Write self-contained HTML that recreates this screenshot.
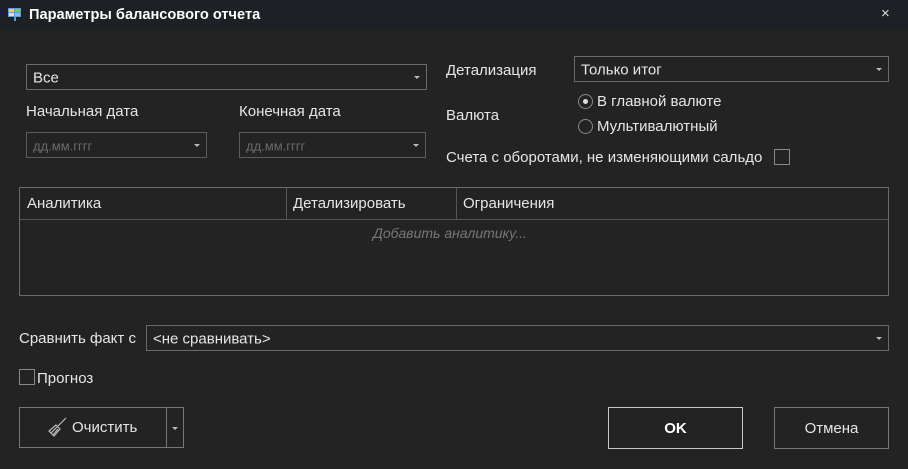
<!DOCTYPE html>
<html><head><meta charset="utf-8"><style>
*{box-sizing:border-box;margin:0;padding:0}
body{width:908px;height:469px;background:#232323;font-family:"Liberation Sans","DejaVu Sans",sans-serif;font-size:15px;color:#e6e6e6;position:relative;overflow:hidden}
.a{position:absolute;white-space:nowrap}
.box{position:absolute;border:1px solid #6a6a6a;background:#232323}
.arr{position:absolute;right:6px;top:50%;margin-top:-1px;width:0;height:0;border-left:3px solid transparent;border-right:3px solid transparent;border-top:3px solid #bbb}
.t{position:absolute;left:6px;top:50%;transform:translateY(-45%)}
.l{margin-top:1px}
</style></head><body>
<div class="a" style="left:0;top:0;width:908px;height:30px;background:#1d2024"></div>
<svg class="a" style="left:8px;top:8px" width="14" height="14"><rect x="0" y="0" width="13" height="9" fill="#5aa0d8"/><rect x="1" y="1" width="5" height="3" fill="#f0d060"/><rect x="7" y="1" width="5" height="3" fill="#80c860"/><rect x="1" y="5" width="5" height="3" fill="#e0e0e0"/><rect x="7" y="5" width="5" height="3" fill="#80c0f0"/><rect x="6" y="9" width="2" height="4" fill="#5aa0d8"/></svg>
<div class="a" style="left:29px;top:7px;font-weight:bold;font-size:14.6px;color:#fff">Параметры балансового отчета</div>
<div class="a" style="left:881px;top:5px;font-size:15px;color:#ddd">×</div>

<div class="box" style="left:26px;top:64px;width:401px;height:26px"><span class="t">Все</span><i class="arr"></i></div>
<div class="a l" style="left:26px;top:102px">Начальная дата</div>
<div class="a l" style="left:239px;top:102px">Конечная дата</div>
<div class="box" style="left:26px;top:132px;width:181px;height:26px;border-color:#5c5c5c"><span class="t" style="color:#6a6a6a;font-size:13px">дд.мм.гггг</span><i class="arr"></i></div>
<div class="box" style="left:239px;top:132px;width:187px;height:26px;border-color:#5c5c5c"><span class="t" style="color:#6a6a6a;font-size:13px">дд.мм.гггг</span><i class="arr"></i></div>

<div class="a l" style="left:446px;top:61px">Детализация</div>
<div class="box" style="left:574px;top:56px;width:315px;height:26px"><span class="t">Только итог</span><i class="arr"></i></div>
<div class="a l" style="left:446px;top:106px">Валюта</div>
<div class="a" style="left:578px;top:94px;width:15px;height:15px;border:1px solid #888;border-radius:50%"><div style="position:absolute;left:4px;top:4px;width:5px;height:5px;border-radius:50%;background:#ddd"></div></div>
<div class="a l" style="left:597px;top:92px">В главной валюте</div>
<div class="a" style="left:578px;top:119px;width:15px;height:15px;border:1px solid #888;border-radius:50%"></div>
<div class="a l" style="left:597px;top:117px">Мультивалютный</div>
<div class="a l" style="left:446px;top:148px">Счета с оборотами, не изменяющими сальдо</div>
<div class="a" style="left:774px;top:149px;width:16px;height:16px;border:1px solid #888"></div>

<div class="box" style="left:19px;top:187px;width:870px;height:109px"></div>
<div class="a" style="left:20px;top:219px;width:868px;height:1px;background:#555"></div>
<div class="a" style="left:286px;top:188px;width:1px;height:31px;background:#555"></div>
<div class="a" style="left:456px;top:188px;width:1px;height:31px;background:#555"></div>
<div class="a l" style="left:27px;top:194px">Аналитика</div>
<div class="a l" style="left:293px;top:194px">Детализировать</div>
<div class="a l" style="left:463px;top:194px">Ограничения</div>
<div class="a l" style="left:373px;top:224px;font-style:italic;color:#777;font-size:14px">Добавить аналитику...</div>

<div class="a l" style="left:19px;top:329px">Сравнить факт с</div>
<div class="box" style="left:146px;top:325px;width:743px;height:26px"><span class="t">&lt;не сравнивать&gt;</span><i class="arr"></i></div>
<div class="a" style="left:19px;top:369px;width:16px;height:16px;border:1px solid #888"></div>
<div class="a l" style="left:37px;top:369px">Прогноз</div>

<div class="box" style="left:19px;top:407px;width:165px;height:41px;border-color:#777"></div>
<div class="a" style="left:166px;top:408px;width:1px;height:39px;background:#777"></div>
<i class="arr" style="left:172px;right:auto;top:427px;margin:0"></i>
<svg class="a" style="left:48px;top:417px" width="20" height="20" fill="none" stroke="#bbb" stroke-width="1.2"><path d="M18 1 L10 9"/><path d="M8 8 L12 12 L6 19 L1 14 Z"/><path d="M3 16 L9 10 M5 18 L10 12"/></svg>
<div class="a l" style="left:72px;top:418px">Очистить</div>

<div class="box" style="left:608px;top:407px;width:135px;height:42px;border-color:#c8c8c8"></div>
<div class="a l" style="left:608px;top:419px;width:135px;text-align:center;font-weight:bold;color:#fff">OK</div>
<div class="box" style="left:774px;top:407px;width:115px;height:42px;border-color:#777"></div>
<div class="a l" style="left:774px;top:419px;width:115px;text-align:center">Отмена</div>
</body></html>
